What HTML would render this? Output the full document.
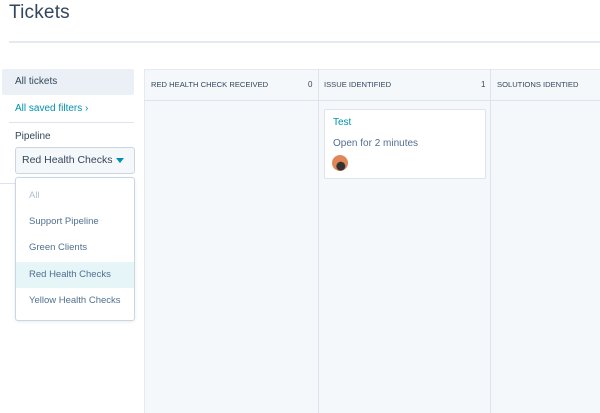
<!DOCTYPE html>
<html><head><style>
*{margin:0;padding:0;box-sizing:border-box}
body{width:600px;height:413px;overflow:hidden;background:#fff;font-family:"Liberation Sans",sans-serif;color:#33475b;position:relative}
.a{position:absolute}
</style></head><body>
<div class="a" style="left:9px;top:2px;font-size:19px;color:#33475b;font-weight:300;letter-spacing:0.2px">Tickets</div>
<div class="a" style="left:9px;top:41px;width:591px;height:2px;background:#e5eaf0"></div>

<div class="a" style="left:2px;top:69px;width:132px;height:26px;background:#eaf0f6;border-radius:2px"></div>
<div class="a" style="left:15px;top:76px;font-size:10px;color:#33475b">All tickets</div>
<div class="a" style="left:15px;top:103px;font-size:10px;color:#0091ae">All saved filters ›</div>
<div class="a" style="left:9px;top:122px;width:125px;height:1px;background:#dfe3eb"></div>
<div class="a" style="left:15px;top:131px;font-size:10px;color:#33475b">Pipeline</div>
<div class="a" style="left:15px;top:147px;width:120px;height:27px;background:#f5f8fa;border:1px solid #cbd6e2;border-radius:3px"></div>
<div class="a" style="left:22px;top:154px;font-size:10.5px;color:#33475b">Red Health Checks</div>
<div class="a" style="left:116px;top:158px;width:0;height:0;border-left:4px solid transparent;border-right:4px solid transparent;border-top:5px solid #0091ae"></div>
<div class="a" style="left:0;top:183px;width:15px;height:1px;background:#dfe3eb"></div>

<div class="a" style="left:144px;top:69px;width:456px;height:344px;background:#f5f8fa;border-left:1px solid #e5eaf0;border-top:1px solid #e5eaf0"></div>
<div class="a" style="left:144px;top:100px;width:456px;height:1px;background:#dfe3eb"></div>
<div class="a" style="left:318px;top:69px;width:1px;height:344px;background:#dfe3eb"></div>
<div class="a" style="left:490px;top:69px;width:1px;height:344px;background:#dfe3eb"></div>
<div class="a" style="left:151px;top:80px;font-size:7.6px;color:#33475b">RED HEALTH CHECK RECEIVED</div>
<div class="a" style="left:308px;top:80px;font-size:8px;color:#33475b">0</div>
<div class="a" style="left:324px;top:80px;font-size:7.6px;color:#33475b">ISSUE IDENTIFIED</div>
<div class="a" style="left:481px;top:80px;font-size:8px;color:#33475b">1</div>
<div class="a" style="left:497px;top:80px;font-size:7.6px;color:#33475b">SOLUTIONS IDENTIED</div>

<div class="a" style="left:324px;top:109px;width:162px;height:70px;background:#fff;border:1px solid #dfe3eb;border-radius:2px"></div>
<div class="a" style="left:333px;top:117px;font-size:10px;color:#0091ae">Test</div>
<div class="a" style="left:333px;top:138px;font-size:10px;color:#516f90">Open for 2 minutes</div>
<div class="a" style="left:332px;top:155px;width:16px;height:16px;border-radius:50%;background:radial-gradient(circle at 55% 70%,#333 0 28%,#e0875a 34%)"></div>

<div class="a" style="left:15px;top:177px;width:120px;height:144px;background:#fff;border:1px solid #cbd6e2;border-radius:3px;box-shadow:0 1px 3px rgba(0,0,0,.08)"></div>
<div class="a" style="left:16px;top:262px;width:118px;height:26px;background:#e5f5f8"></div>
<div class="a" style="left:29px;top:190px;font-size:9.5px;color:#b0c1d4">All</div>
<div class="a" style="left:29px;top:216px;font-size:9.5px;color:#516f90">Support Pipeline</div>
<div class="a" style="left:29px;top:242px;font-size:9.5px;color:#516f90">Green Clients</div>
<div class="a" style="left:29px;top:269px;font-size:9.5px;color:#516f90">Red Health Checks</div>
<div class="a" style="left:29px;top:295px;font-size:9.5px;color:#516f90">Yellow Health Checks</div>
</body></html>
